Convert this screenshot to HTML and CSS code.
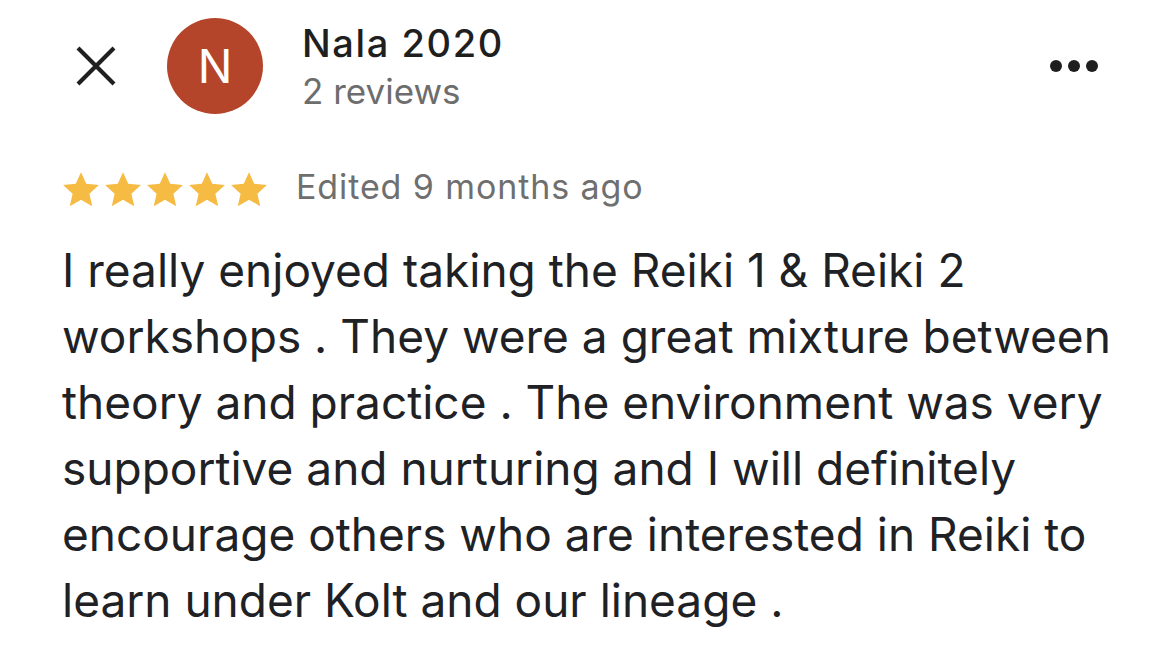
FILE: index.html
```html
<!DOCTYPE html>
<html>
<head>
<meta charset="utf-8">
<link rel="stylesheet" href="styles.css">
</head>
<body>
<div class="review">
  <div class="header">
    <svg class="close" viewBox="0 0 44 44" width="44" height="44"><path d="M4 4 L40 40 M40 4 L4 40" stroke="#1f1f1f" stroke-width="4.2" fill="none"/></svg>
    <div class="avatar">N</div>
    <div class="who">
      <div class="name">Nala 2020</div>
      <div class="count">2 reviews</div>
    </div>
    <div class="more"><span></span><span></span><span></span></div>
  </div>
  <div class="meta">
    <div class="stars">
      <svg viewBox="0 0 24 24" width="38" height="38"><path d="M12 0.8l3.3 7.3 8 .8-6 5.4 1.8 7.9L12 18.1l-7.1 4.1 1.8-7.9-6-5.4 8-.8z" fill="#f6bb43"/></svg>
      <svg viewBox="0 0 24 24" width="38" height="38"><path d="M12 0.8l3.3 7.3 8 .8-6 5.4 1.8 7.9L12 18.1l-7.1 4.1 1.8-7.9-6-5.4 8-.8z" fill="#f6bb43"/></svg>
      <svg viewBox="0 0 24 24" width="38" height="38"><path d="M12 0.8l3.3 7.3 8 .8-6 5.4 1.8 7.9L12 18.1l-7.1 4.1 1.8-7.9-6-5.4 8-.8z" fill="#f6bb43"/></svg>
      <svg viewBox="0 0 24 24" width="38" height="38"><path d="M12 0.8l3.3 7.3 8 .8-6 5.4 1.8 7.9L12 18.1l-7.1 4.1 1.8-7.9-6-5.4 8-.8z" fill="#f6bb43"/></svg>
      <svg viewBox="0 0 24 24" width="38" height="38"><path d="M12 0.8l3.3 7.3 8 .8-6 5.4 1.8 7.9L12 18.1l-7.1 4.1 1.8-7.9-6-5.4 8-.8z" fill="#f6bb43"/></svg>
    </div>
    <div class="edited">Edited 9 months ago</div>
  </div>
  <p class="text">I really enjoyed taking the Reiki 1 &amp; Reiki 2 workshops . They were a great mixture between theory and practice . The environment was very supportive and nurturing and I will definitely encourage others who are interested in Reiki to learn under Kolt and our lineage .</p>
</div>
</body>
</html>
```
FILE: styles.css
```css
html, body {
  margin: 0;
  padding: 0;
  background: #ffffff;
}
body {
  font-family: Inter, Roboto, "Liberation Sans", sans-serif;
  color: #202124;
  width: 1170px;
  height: 670px;
  overflow: hidden;
}
.review {
  padding: 18px 0 0 62px;
}
.header {
  display: flex;
  align-items: flex-start;
  height: 96px;
}
.close {
  margin: 26px 0 0 12px;
  flex: none;
}
.avatar {
  flex: none;
  width: 96px;
  height: 96px;
  border-radius: 50%;
  background: #b5452a;
  color: #fff;
  font-size: 46px;
  line-height: 96px;
  text-align: center;
  margin-left: 49px;
}
.who {
  margin-left: 39px;
  flex: 1;
}
.name {
  font-size: 38px;
  font-weight: 500;
  line-height: 40px;
  margin-top: 5px;
  color: #1f1f1f;
  letter-spacing: 1.6px;
}
.count {
  font-size: 35px;
  line-height: 40px;
  margin-top: 8px;
  color: #6d6d6d;
}
.more {
  display: flex;
  gap: 6px;
  margin: 42px 72px 0 0;
}
.more span {
  width: 12px;
  height: 12px;
  border-radius: 50%;
  background: #1f1f1f;
}
.meta {
  display: flex;
  align-items: flex-start;
  margin-top: 55px;
}
.stars {
  display: flex;
  gap: 4px;
  margin-top: 2px;
}
.stars svg {
  display: block;
}
.edited {
  font-size: 34px;
  line-height: 38px;
  margin-top: -1px;
  color: #6f6f6f;
  margin-left: 28px;
  letter-spacing: 0.9px;
}
.text {
  margin: 28px 0 0 0;
  width: 1080px;
  font-size: 46px;
  line-height: 66px;
  color: #202124;
}
```
